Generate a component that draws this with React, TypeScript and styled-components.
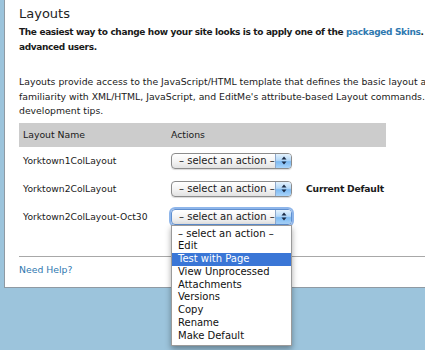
import { Fragment } from 'react'
import styled, { createGlobalStyle } from 'styled-components'

const GlobalStyle = createGlobalStyle`
  html, body {
    margin: 0;
    padding: 0;
    height: 100%;
    overflow: hidden;
    background: #9cc4dc;
  }
  body {
    font-family: "DejaVu Sans", Verdana, sans-serif;
    color: #1a1a1a;
  }
`

const Panel = styled.div`
  margin-left: 4px;
  width: 440px;
  background: #ffffff;
  border-left: 1px solid #8f9aa3;
  border-bottom: 1px solid #8f9aa3;
  padding: 5px 0 10px 14px;
  box-sizing: border-box;
`

const Title = styled.h1`
  margin: 0;
  font-size: 13px;
  line-height: 18px;
  font-weight: normal;
  color: #1e1e1e;
`

const Intro = styled.p`
  margin: 2px 0 0;
  font-size: 9px;
  letter-spacing: -0.35px;
  line-height: 15px;
  font-weight: bold;
  white-space: nowrap;
`

const Body = styled.p`
  margin: 20px 0 0;
  font-size: 9.3px;
  line-height: 14.5px;
  white-space: nowrap;
`

const Link = styled.a`
  color: #2f79b0;
  text-decoration: none;
`

const Table = styled.div`
  margin-top: 4px;
  width: 367px;
  display: grid;
  grid-template-columns: 148px 135px 1fr;
`

const HeadCell = styled.div`
  background: #cccccc;
  height: 24px;
  display: flex;
  align-items: center;
  padding-left: 4px;
  font-size: 9.3px;
`

const Cell = styled.div<{ $bold?: boolean }>`
  height: 28px;
  display: flex;
  align-items: center;
  padding-left: 4px;
  font-size: 9.2px;
  white-space: nowrap;
  font-weight: ${p => (p.$bold ? 'bold' : 'normal')};
  letter-spacing: ${p => (p.$bold ? '-0.2px' : '0')};
  position: relative;
`

const SelectBox = styled.div<{ $focused?: boolean }>`
  width: 121px;
  height: 16px;
  box-sizing: border-box;
  border: 1px solid ${p => (p.$focused ? '#5f8fd0' : '#8c8c8c')};
  border-radius: 4px;
  background: linear-gradient(#ffffff, #f4f4f4 50%, #e2e2e2);
  box-shadow: ${p => (p.$focused ? '0 0 0 2px #8fb6ea' : '0 1px 1px rgba(0,0,0,0.15)')};
  display: flex;
  align-items: center;
  overflow: hidden;
`

const SelectText = styled.span`
  flex: 1;
  padding-left: 7px;
  font-size: 10px;
  white-space: nowrap;
`

const Stepper = styled.span`
  width: 15px;
  height: 100%;
  border-left: 1px solid #8fa9cc;
  background: linear-gradient(#e4f2fd, #b4d8f8 45%, #7dbaf2 55%, #a9d4fa);
  display: flex;
  align-items: center;
  justify-content: center;
`

const Menu = styled.div`
  position: absolute;
  left: 4px;
  top: 22px;
  width: 121px;
  box-sizing: border-box;
  background: #ffffff;
  border: 1px solid #9a9a9a;
  box-shadow: 0 3px 6px rgba(0, 0, 0, 0.35);
  padding: 2px 0;
  z-index: 2;
`

const MenuItem = styled.div<{ $active?: boolean }>`
  height: 12.8px;
  line-height: 12.8px;
  padding-left: 6px;
  font-size: 10px;
  white-space: nowrap;
  color: ${p => (p.$active ? '#ffffff' : '#111111')};
  background: ${p => (p.$active ? '#3a76d6' : 'transparent')};
`

const Rule = styled.hr`
  margin: 25px 0 0;
  border: none;
  border-top: 1px solid #a8a8a8;
  width: 450px;
`

const Help = styled.a`
  display: block;
  margin-top: 6px;
  line-height: 14px;
  font-size: 9.3px;
  color: #2f79b0;
  text-decoration: none;
`

const actions = [
  '– select an action –',
  'Edit',
  'Test with Page',
  'View Unprocessed',
  'Attachments',
  'Versions',
  'Copy',
  'Rename',
  'Make Default',
]

const layouts = [
  { name: 'Yorktown1ColLayout', note: '' },
  { name: 'Yorktown2ColLayout', note: 'Current Default' },
  { name: 'Yorktown2ColLayout-Oct30', note: '', open: true },
]

function Select({ focused }: { focused?: boolean }) {
  return (
    <SelectBox $focused={focused}>
      <SelectText>– select an action –</SelectText>
      <Stepper>
        <svg width="6" height="9" viewBox="0 0 6 9">
          <path d="M3 0.5 L5.5 3.5 H0.5 Z" fill="#1b2a44" />
          <path d="M3 8.5 L5.5 5.5 H0.5 Z" fill="#1b2a44" />
        </svg>
      </Stepper>
    </SelectBox>
  )
}

export default function App() {
  return (
    <>
      <GlobalStyle />
      <Panel>
        <Title>Layouts</Title>
        <Intro>
          The easiest way to change how your site looks is to apply one of the{' '}
          <Link href="#">packaged Skins</Link>. Layouts are
          <br />
          advanced users.
        </Intro>
        <Body>
          Layouts provide access to the JavaScript/HTML template that defines the basic layout and
          <br />
          familiarity with XML/HTML, JavaScript, and EditMe's attribute-based Layout commands. Read
          <br />
          development tips.
        </Body>
        <Table>
          <HeadCell>Layout Name</HeadCell>
          <HeadCell>Actions</HeadCell>
          <HeadCell />
          {layouts.map(l => (
            <Fragment key={l.name}>
              <Cell>{l.name}</Cell>
              <Cell>
                <Select focused={l.open} />
                {l.open && (
                  <Menu>
                    {actions.map(a => (
                      <MenuItem key={a} $active={a === 'Test with Page'}>
                        {a}
                      </MenuItem>
                    ))}
                  </Menu>
                )}
              </Cell>
              <Cell $bold>{l.note}</Cell>
            </Fragment>
          ))}
        </Table>
        <Rule />
        <Help href="#">Need Help?</Help>
      </Panel>
    </>
  )
}
